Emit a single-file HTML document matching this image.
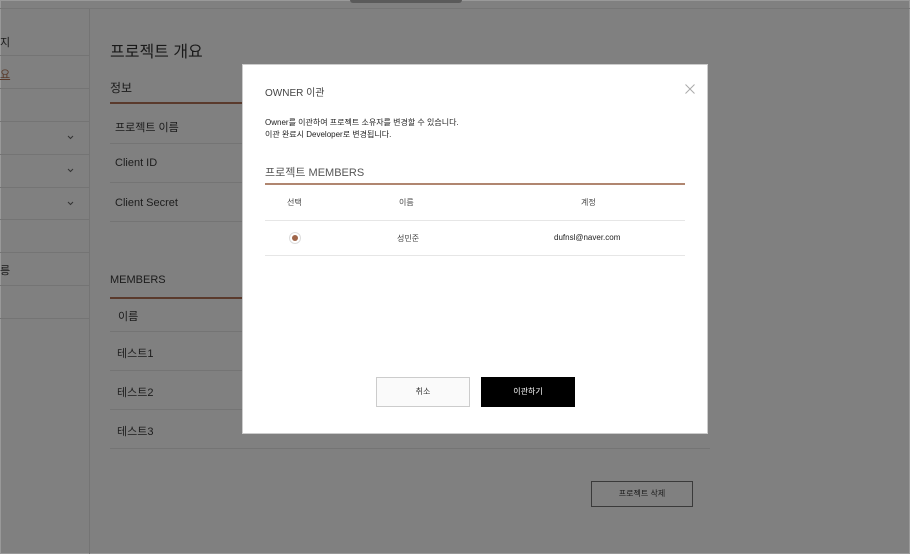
<!DOCTYPE html>
<html><head><meta charset="utf-8"><style>
*{margin:0;padding:0;box-sizing:border-box}
body{width:910px;height:554px;background:#808080;font-family:"Liberation Sans","Noto Sans CJK KR",sans-serif;position:relative;overflow:hidden;color:#1a1a1a}
.a{position:absolute}
.l{position:absolute;height:1px;background:#747474}
.t{position:absolute;font-size:11px;color:#1c1c1c}
.m{position:absolute;font-size:8px;color:#222}
</style></head><body>
<div class="a" style="left:0;top:0;width:910px;height:554px;border:1px solid #999"></div>
<div class="l" style="left:0;top:8px;width:910px;background:#767676"></div>
<div class="a" style="left:350px;top:0;width:112px;height:3px;background:#5a5a5a;border-radius:0 0 4px 4px"></div>
<div class="a" style="left:89px;top:9px;width:1px;height:545px;background:#747474"></div>
<div class="a" style="left:0;top:34px;font-size:11px">지</div>
<div class="a" style="left:0;top:66px;font-size:11px;color:#5a3a2a;text-decoration:underline">요</div>
<div class="a" style="left:0;top:262px;font-size:11px">릉</div>
<div class="l" style="left:0;top:55px;width:89px"></div>
<div class="l" style="left:0;top:88px;width:89px"></div>
<div class="l" style="left:0;top:121px;width:89px"></div>
<div class="l" style="left:0;top:154px;width:89px"></div>
<div class="l" style="left:0;top:187px;width:89px"></div>
<div class="l" style="left:0;top:219px;width:89px"></div>
<div class="l" style="left:0;top:252px;width:89px"></div>
<div class="l" style="left:0;top:285px;width:89px"></div>
<div class="l" style="left:0;top:318px;width:89px"></div>
<svg class="a" style="left:67px;top:135px" width="7" height="5"><path d="M1 1L3.5 3.5L6 1" stroke="#333" fill="none"/></svg>
<svg class="a" style="left:67px;top:168px" width="7" height="5"><path d="M1 1L3.5 3.5L6 1" stroke="#333" fill="none"/></svg>
<svg class="a" style="left:67px;top:201px" width="7" height="5"><path d="M1 1L3.5 3.5L6 1" stroke="#333" fill="none"/></svg>
<div class="a" style="left:110px;top:38px;font-size:16px;color:#1a1a1a">프로젝트 개요</div>
<div class="a" style="left:110px;top:79px;font-size:12px">정보</div>
<div class="a" style="left:110px;top:102px;width:140px;height:2px;background:#5a3a2c"></div>
<div class="t" style="left:115px;top:119px">프로젝트 이름</div>
<div class="l" style="left:110px;top:143px;width:140px"></div>
<div class="t" style="left:115px;top:157px">Client ID</div>
<div class="l" style="left:110px;top:182px;width:140px"></div>
<div class="t" style="left:115px;top:197px">Client Secret</div>
<div class="l" style="left:110px;top:221px;width:140px"></div>
<div class="a" style="left:110px;top:274px;font-size:11px">MEMBERS</div>
<div class="a" style="left:110px;top:297px;width:140px;height:2px;background:#5a3a2c"></div>
<div class="t" style="left:118px;top:308px">이름</div>
<div class="l" style="left:110px;top:331px;width:140px"></div>
<div class="t" style="left:117px;top:345px">테스트1</div>
<div class="l" style="left:110px;top:370px;width:140px"></div>
<div class="t" style="left:117px;top:384px">테스트2</div>
<div class="l" style="left:110px;top:409px;width:140px"></div>
<div class="t" style="left:117px;top:423px">테스트3</div>
<div class="l" style="left:110px;top:448px;width:600px"></div>
<div class="a" style="left:591px;top:481px;width:102px;height:26px;border:1px solid #3a3a3a;font-size:8px;text-align:center;line-height:24px">프로젝트 삭제</div>

<div class="a" style="left:242px;top:64px;width:466px;height:370px;background:#fff;border:1px solid #ccc">
<div class="a" style="left:22px;top:19px;font-size:10px;color:#444">OWNER 이관</div>
<svg class="a" style="left:442px;top:19px" width="10" height="10"><path d="M0.5 0.5L9.5 9.5M9.5 0.5L0.5 9.5" stroke="#aaa" stroke-width="1"/></svg>
<div class="m" style="left:22px;top:52px">Owner를 이관하여 프로젝트 소유자를 변경할 수 있습니다.</div>
<div class="m" style="left:22px;top:64px">이관 완료시 Developer로 변경됩니다.</div>
<div class="a" style="left:22px;top:99px;font-size:11px;color:#555">프로젝트 MEMBERS</div>
<div class="a" style="left:22px;top:118px;width:420px;height:2px;background:#b08670"></div>
<div class="m" style="left:44px;top:132px;color:#444">선택</div>
<div class="m" style="left:156px;top:132px;color:#444">이름</div>
<div class="m" style="left:338px;top:132px;color:#444">계정</div>
<div class="a" style="left:22px;top:155px;width:420px;height:1px;background:#e6e6e6"></div>
<div class="a" style="left:46px;top:167px;width:12px;height:12px;border:1px solid #ddd;border-radius:50%"><div class="a" style="left:2px;top:2px;width:6px;height:6px;background:#a0664a;border-radius:50%"></div></div>
<div class="m" style="left:154px;top:168px;color:#444">성민준</div>
<div class="m" style="left:311px;top:168px">dufnsl@naver.com</div>
<div class="a" style="left:22px;top:190px;width:420px;height:1px;background:#e6e6e6"></div>
<div class="a" style="left:133px;top:312px;width:94px;height:30px;border:1px solid #ccc;background:#fafafa;font-size:8px;text-align:center;line-height:28px;color:#333">취소</div>
<div class="a" style="left:238px;top:312px;width:94px;height:30px;background:#000;color:#fff;font-size:8px;text-align:center;line-height:30px">이관하기</div>
</div>
</body></html>
